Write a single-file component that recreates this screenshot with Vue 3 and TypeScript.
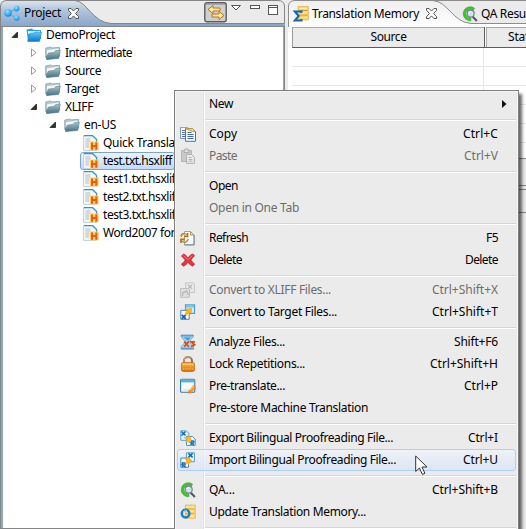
<script setup lang="ts">
interface TreeNode { label: string; width: number; level: number; icon: string; arrow?: 'open' | 'closed'; selected?: boolean }
interface MenuItem { label: string; width: number; keys?: string; keysWidth?: number; icon?: string; disabled?: boolean; hot?: boolean; submenu?: boolean }

const tree: TreeNode[] = [
  { label: 'DemoProject', width: 69, level: 0, icon: 'project', arrow: 'open' },
  { label: 'Intermediate', width: 67, level: 1, icon: 'folder', arrow: 'closed' },
  { label: 'Source', width: 36, level: 1, icon: 'folder', arrow: 'closed' },
  { label: 'Target', width: 34, level: 1, icon: 'folder', arrow: 'closed' },
  { label: 'XLIFF', width: 28, level: 1, icon: 'folder', arrow: 'open' },
  { label: 'en-US', width: 32, level: 2, icon: 'folder', arrow: 'open' },
  { label: 'Quick Translation', width: 93, level: 3, icon: 'file' },
  { label: 'test.txt.hsxliff', width: 69, level: 3, icon: 'file', selected: true },
  { label: 'test1.txt.hsxliff', width: 76, level: 3, icon: 'file' },
  { label: 'test2.txt.hsxliff', width: 76, level: 3, icon: 'file' },
  { label: 'test3.txt.hsxliff', width: 76, level: 3, icon: 'file' },
  { label: 'Word2007 format', width: 93, level: 3, icon: 'file' },
]

const groups: MenuItem[][] = [
  [{ label: 'New', width: 24, submenu: true }],
  [
    { label: 'Copy', width: 28, keys: 'Ctrl+C', keysWidth: 35, icon: 'copy' },
    { label: 'Paste', width: 28, keys: 'Ctrl+V', keysWidth: 34, icon: 'paste', disabled: true },
  ],
  [
    { label: 'Open', width: 29 },
    { label: 'Open in One Tab', width: 90, disabled: true },
  ],
  [
    { label: 'Refresh', width: 39, keys: 'F5', keysWidth: 12, icon: 'refresh' },
    { label: 'Delete', width: 33, keys: 'Delete', keysWidth: 33, icon: 'delete' },
  ],
  [
    { label: 'Convert to XLIFF Files...', width: 122, keys: 'Ctrl+Shift+X', keysWidth: 66, icon: 'toxliff', disabled: true },
    { label: 'Convert to Target Files...', width: 128, keys: 'Ctrl+Shift+T', keysWidth: 66, icon: 'totarget' },
  ],
  [
    { label: 'Analyze Files...', width: 76, keys: 'Shift+F6', keysWidth: 44, icon: 'analyze' },
    { label: 'Lock Repetitions...', width: 96, keys: 'Ctrl+Shift+H', keysWidth: 68, icon: 'lock' },
    { label: 'Pre-translate...', width: 76, keys: 'Ctrl+P', keysWidth: 34, icon: 'pretranslate' },
    { label: 'Pre-store Machine Translation', width: 159 },
  ],
  [
    { label: 'Export Bilingual Proofreading File...', width: 184, keys: 'Ctrl+I', keysWidth: 30, icon: 'export' },
    { label: 'Import Bilingual Proofreading File...', width: 187, keys: 'Ctrl+U', keysWidth: 35, icon: 'import', hot: true },
  ],
  [
    { label: 'QA...', width: 26, keys: 'Ctrl+Shift+B', keysWidth: 66, icon: 'qa' },
    { label: 'Update Translation Memory...', width: 157, icon: 'update' },
  ],
  [],
]

/* Spreads a label's letters so that it takes exactly the given width. */
const vFit = {
  mounted(el: HTMLElement, binding: { value?: number }) {
    if (!binding.value) return
    const count = (el.textContent ?? '').length
    const natural = el.getBoundingClientRect().width
    el.style.letterSpacing = `${(binding.value - natural) / count}px`
  },
}
</script>

<template>
  <div class="window">
    <svg class="defs" width="0" height="0" aria-hidden="true">
      <defs>
        <linearGradient id="gFolder" x1="0" y1="0" x2="0" y2="1"><stop offset="0" stop-color="#a9c4ca" /><stop offset="1" stop-color="#437280" /></linearGradient>
        <linearGradient id="gBlue" x1="0" y1="0" x2="0" y2="1"><stop offset="0" stop-color="#63c9fb" /><stop offset="1" stop-color="#0a79cf" /></linearGradient>
        <linearGradient id="gLock" x1="0" y1="0" x2="0" y2="1"><stop offset="0" stop-color="#ffc052" /><stop offset="1" stop-color="#d96a08" /></linearGradient>
        <radialGradient id="gBall" cx=".4" cy=".3" r=".7"><stop offset="0" stop-color="#8be8ff" /><stop offset="1" stop-color="#0a8bea" /></radialGradient>
      </defs>
      <symbol id="nodes" viewBox="0 0 16 16">
        <path d="M4 8 12 4M4 8l8 5" stroke="#7fa9c8" stroke-width="1.4" />
        <circle cx="4" cy="8" r="3.7" fill="url(#gBall)" /><circle cx="12.7" cy="3.6" r="2.8" fill="url(#gBall)" /><circle cx="12.7" cy="13" r="2.8" fill="url(#gBall)" />
      </symbol>
      <symbol id="project" viewBox="0 0 16 16">
        <path d="M.6 2.6 6 1.6l1 1.2 8 .4v8l-2 3H2z" fill="#2a9be6" />
        <path d="M2 4 14 4v3H2z" fill="#d9f3ff" /><path d="M3.8 6.4 8 6l1-1 6.6.2-2.2 9.2H1.6z" fill="url(#gBlue)" stroke="#1683d3" stroke-width=".5" />
      </symbol>
      <symbol id="folder" viewBox="0 0 16 16">
        <path d="M.7 3 6 1.9l1 1 7.6-.6v9L2 14.5.7 12z" fill="#b4c8cd" stroke="#7f9ba3" stroke-width=".7" />
        <path d="M2 5.2 13.6 3.6v4L2 11z" fill="#f2f6f7" />
        <path d="M1.2 12 3.5 8 9 7.4l1.6-1.8 4.7-.5-1.6 8.4L1.6 14.6z" fill="url(#gFolder)" stroke="#527d89" stroke-width=".5" />
      </symbol>
      <symbol id="file" viewBox="0 0 16 16">
        <path d="M.6.6H10l3.4 3.6v11.2H.6z" fill="#f4f8fb" stroke="#b5d2e6" /><path d="M1 .7h8.6l4 3.8V8" fill="none" stroke="#2f94d4" stroke-width="1.2" />
        <path d="M2.4 4h5M2.4 6h5M2.4 8h4M2.4 10h4M2.4 12h4" stroke="#b4b9be" />
        <path d="M7 6.5h8.7v8.8H7z" fill="#ffd25d" /><path d="M9 7.500v7.300M13.300 7.500v7.300M9 11h4" stroke="#ea5a1c" stroke-width="2" />
      </symbol>
      <symbol id="copy" viewBox="0 0 16 16">
        <path d="M.6 1.5h7l2 2v9h-9z" fill="#fff" stroke="#7790b4" /><path d="M.6 1.5h7l2 2" fill="none" stroke="#bda45b" /><path d="M2 4.5h3M2 6.5h3M2 8.5h3M2 10.5h3" stroke="#5877ae" />
        <path d="M5.5 2.5h7l3 3v9.8h-10z" fill="#f5f8ff" stroke="#58709c" /><path d="M5.5 2.5h7l3 3h-3z" fill="#eed78c" stroke="#b89743" /><path d="M7.5 6.5h4M7.5 8.5h6M7.5 10.5h6M7.5 12.5h6" stroke="#4667a8" />
      </symbol>
      <symbol id="paste" viewBox="0 0 16 16">
        <path d="M1.500 2.500h10v11h-10z" fill="#c9c9c9" stroke="#b4b4b4" /><path d="M4 3.500 5 1h3l1 2.500v1H4z" fill="#ddd" stroke="#ababab" /><path d="M6.5 6.5h5l3 3v5.8h-8z" fill="#eaeaea" stroke="#b0b0b0" /><path d="M8.5 9.5h3M8.5 11.5h4M8.5 13.2h4" stroke="#b4b4b4" />
      </symbol>
      <symbol id="refresh" viewBox="0 0 16 16">
        <path d="M4.5 1.5h6l3.6 3.6v9.8H4.5z" fill="#f9fbff" stroke="#a9a782" /><path d="M14.1 5v9.9H4.5" fill="none" stroke="#7285ac" /><path d="M10.5 1.5v3.6h3.6z" fill="#f3df9c" stroke="#b89b50" />
        <path d="M1 6.500C1.5 3.500 5 3 6 5M7.500 3v3.500H4.200M8 9c-.5 3-4 4-5.500 2M1 13V9.400h3.600" fill="none" stroke="#a87420" stroke-width="1.7" /><path d="M1.5 6.3C2 4.2 5 3.6 6 5M7.6 9.3c-.6 2.4-3.3 3-4.6 1.6" fill="none" stroke="#f2cd6c" />
      </symbol>
      <symbol id="delete" viewBox="0 0 16 16">
        <path d="M3.500 2C5.500 2.800 6.800 4.400 8 5.600 9.500 4.100 10.800 2.500 12.800 2l1.700 1.900C13 5 11.600 6.600 10.800 8c1 1.500 2.400 2.900 3.800 4l-2 2.200C11 13.400 9.400 12 8 10.600 6.600 12 5 13.800 3.300 14.200L1.400 12C3 11 4.500 9.600 5.300 8.100 4.300 6.600 3 5.300 1.500 4.200z" fill="#e2363e" stroke="#bb1c28" stroke-width=".8" /><path d="m3.400 3.600 4.600 4 4.400-4" fill="none" stroke="#f0747c" />
      </symbol>
      <symbol id="toxliff" viewBox="0 0 16 16">
        <path d="M5.6.8h7.6l1.3 1.5v8.2H5.6z" fill="#e8e8e8" stroke="#c6c6c6" /><path d="M.6 6.5h8l.9 1v7.8H.6z" fill="#dedede" stroke="#c0c0c0" /><path d="m8 2.8 4 4M12 2.8l-4 4M2.5 14v-3l4-2 2 4" stroke="#bababa" stroke-width="1.4" fill="none" />
      </symbol>
      <symbol id="totarget" viewBox="0 0 16 16">
        <path d="M5.5.9h9v8.5h-9z" fill="#d8effb" stroke="#43a4db" stroke-width="1.2" /><path d="M6 1.5h8v2H6z" fill="#6fc3ed" /><path d="M.8 6.3h8.4v9H.8z" fill="#f7fcff" stroke="#438abd" /><path d="m1.8 10.8 4 4M5.8 10.8l-4 4" stroke="#1260ac" stroke-width="1.7" />
        <path d="m5 11 1.5-4.5-1.2-1.3 6.4-.8-.8 6-1.6-1.4z" fill="#ffb51a" stroke="#e68a08" stroke-width=".5" />
      </symbol>
      <symbol id="analyze" viewBox="0 0 16 16">
        <path d="M1.2.9h12v2l-4 4.8 4.4 5.1v2.4H1v-2.4l4.5-5L1.2 3z" fill="#a4d5ee" stroke="#6a9fbd" stroke-width=".7" /><path d="M1 .9h12.400v1.500H1zM1 13.800h12.600v1.500H1z" fill="#5b9fc8" /><path d="M3.4 3.500h7.6L8 6.400z" fill="#2e9ce0" />
        <path d="m4.2 7.4 4.6 5.4M8.8 7.4l-4.6 5.4M10 7.8h5M12.5 7.8v1.5l2 1.5-3.5 2" stroke="#de4a14" stroke-width="1.7" fill="none" />
      </symbol>
      <symbol id="lock" viewBox="0 0 16 16">
        <path d="M4 8V4.800a4 3.800 0 0 1 8 0V8" fill="none" stroke="#9a6e4b" stroke-width="2" /><path d="M4 6V4.700a4 4 0 0 1 6.500-3" fill="none" stroke="#ddc0a1" stroke-width=".8" />
        <rect x="1.4" y="6.4" width="13.2" height="9" rx="2" fill="url(#gLock)" stroke="#b85d0c" stroke-width=".7" /><path d="M3 8.500h10M2.500 13h11" stroke="#ffd27a" stroke-width=".8" stroke-dasharray="2 1" />
      </symbol>
      <symbol id="pretranslate" viewBox="0 0 16 16">
        <rect x=".6" y="1.2" width="14.2" height="13" rx="1" fill="#f4fafc" stroke="#397ba2" stroke-width="1.1" /><path d="M1 1.6h13.5v2.8H1z" fill="#57b3df" /><path d="M3 12h6" stroke="#c7dbe4" />
        <path d="m8.5 15.2.7-3 4.6-4.6 2 2-4.5 4.8z" fill="#ff9a1f" stroke="#d66c0b" stroke-width=".6" /><path d="m9.4 12.4 4-4" stroke="#ffdf76" />
      </symbol>
      <symbol id="export" viewBox="0 0 16 16">
        <path d="M.8.8h5.5l2.5 2.5v7H.8z" fill="#e3f5ff" stroke="#55a3d2" /><path d="m1.5 1.5 4 4M5.5 1.5l-4 4" stroke="#1769b3" stroke-width="1.5" /><path d="M6.5 6.5h6l2.7 2.5v6.4H6.5z" fill="#eaf7ff" stroke="#4d91c1" />
        <path d="M11 15v-4h2a1 1 0 0 1 0 2h-2l3 2" fill="none" stroke="#1769b3" stroke-width="1.3" /><path d="M4 7.5h4.2V4.8L11 8v4H5.8l1-2.5z" fill="#ffbd28" stroke="#ee9410" stroke-width=".4" />
      </symbol>
      <symbol id="import" viewBox="0 0 16 16">
        <path d="M6.4.8h8v9h-8z" fill="#eaf7ff" stroke="#4d9ed0" /><path d="m8.4 1.4 4.2 4M12.6 1.4l-4.2 4" stroke="#1769b3" stroke-width="1.5" /><path d="M.8 6h7.7v9.3H.8z" fill="#eaf7ff" stroke="#438bbd" />
        <path d="M2.4 15v-4h2a1 1 0 0 1 0 2h-2l3.2 2" fill="none" stroke="#1769b3" stroke-width="1.3" /><path d="m5 6.5 5-1.4v2.7l2 .2-3.5 4.5L7.3 11l-2 1.3 1.2-3.8z" fill="#ffb522" stroke="#ec8a10" stroke-width=".4" />
      </symbol>
      <symbol id="qa" viewBox="0 0 16 16">
        <path d="M12.6 2.3A7 7 0 1 0 9 14.7l-.2-3.2A4 4 0 1 1 11 5z" fill="#45c22f" stroke="#2fa026" stroke-width=".5" /><path d="m10.5 10.5 4.4 4.6" stroke="#53595d" stroke-width="2.1" />
        <circle cx="8.7" cy="7.6" r="3.5" fill="#cbe6f0" stroke="#75858b" stroke-width="1.2" /><path d="M6.8 7a2.2 2.2 0 0 1 2-1.6" fill="none" stroke="#fff" />
      </symbol>
      <symbol id="update" viewBox="0 0 16 16">
        <path d="M5.3 1h10v3.3l-1 .5 1 .5v3.6l-1 .5 1 .5v4.4h-10z" fill="#ffd675" stroke="#e9a62e" stroke-width=".6" /><path d="M5.5 5h9M5.5 9.600h9" stroke="#e5a43c" /><path d="M6 3h8M6 7.2h8M7 12h7" stroke="#fff1bd" />
        <circle cx="5.6" cy="9.6" r="3.8" fill="none" stroke="#1d7fc6" stroke-width="2.5" /><path d="M3 8a3.5 3.5 0 0 1 4-1.6" fill="none" stroke="#79caf5" />
      </symbol>
      <symbol id="sigma" viewBox="0 0 16 16">
        <path d="M5 .5h10.400v3.300l-1 .5 1 .5v3.600l-1 .5 1 .5v4.600H5z" fill="#ffd36a" stroke="#e8a12b" stroke-width=".6" /><path d="M6 4.500h8.500M6 9.100h8.500" stroke="#dd9a30" /><path d="M6 2.500h8M7 6.800h7M9 11.800h5" stroke="#fff1bd" />
        <path d="M8.500 7V5.500H1.700l4 4.500-4 4.500h6.800V13" fill="none" stroke="#1466b8" stroke-width="2" />
      </symbol>
      <symbol id="close" viewBox="0 0 11 11">
        <path d="M.5.5h2.6l2.4 2.6L7.9.5h2.6v1.8L7.6 5.5l2.9 3.2v1.8H7.9L5.5 7.9l-2.4 2.6H.5V8.7l2.9-3.2L.5 2.3z" fill="#fff" stroke="#555" />
      </symbol>
    </svg>

    <section class="project">
      <header class="bar">
        <svg class="tabshape" width="285" height="26" viewBox="0 0 285 26">
          <defs><linearGradient id="gTab" x1="0" y1="0" x2="0" y2="1"><stop offset="0" stop-color="#dce5ef" /><stop offset=".35" stop-color="#b3c6dc" /><stop offset="1" stop-color="#88a7ca" /></linearGradient></defs>
          <path d="M0 23.5h285V26H0z" fill="#88a7ca" />
          <path d="M.5 26V6Q1 .5 7 .5h68c12 1 18 22 36 23V26z" fill="url(#gTab)" />
          <path d="M.5 26V6Q1 .5 7 .5h68c12 1 18 22 36 23h173.500V6Q284 .5 278 .5H75" fill="none" stroke="#858585" />
        </svg>
        <svg class="icon"><use href="#nodes" /></svg>
        <span v-fit="37" class="tabtitle">Project</span>
        <svg class="x"><use href="#close" /></svg>
        <div class="tools">
          <svg width="80" height="22" viewBox="0 0 80 22">
            <rect x=".8" y=".8" width="21.400" height="19" rx="2" fill="#cfcfcf" stroke="#5c5c5c" stroke-width="1.4" /><path d="M2 2.500h19" stroke="#aaa" /><path d="M4 7.500 9 3.500v2.500h7v3H9v2.500zM20 13.500l-5-4V12H8v3h7v2.500z" fill="#ffe9a6" stroke="#b67814" />
            <path d="M27.500 3.500h9L32 8z" fill="#fff" stroke="#555" /><rect x="46.500" y="3.500" width="9" height="3" fill="#fff" stroke="#555" />
            <rect x="64.500" y="3.500" width="9" height="9" fill="#fff" stroke="#555" /><path d="M64 5.500h10" stroke="#555" />
          </svg>
        </div>
      </header>
      <ul class="tree">
        <li v-for="node in tree" :key="node.label" :class="['node', 'level' + node.level]">
          <span class="twist">
            <svg v-if="node.arrow === 'open'" width="8" height="8"><path d="M6.500 1v5.500H1z" fill="#303030" stroke="#202020" stroke-width=".8" /></svg>
            <svg v-else-if="node.arrow" width="8" height="10"><path d="M1.500 1v7.500L6 4.700z" fill="#fff" stroke="#999" /></svg>
          </span>
          <span :class="['cell', { selected: node.selected }]">
            <svg class="icon"><use :href="'#' + node.icon" /></svg>
            <span v-fit="node.width" class="text">{{ node.label }}</span>
          </span>
        </li>
      </ul>
    </section>

    <section class="memory">
      <header class="bar">
        <svg class="tabshape" width="238" height="27" viewBox="0 0 238 27">
          <defs><linearGradient id="gPale" x1="0" y1="0" x2="0" y2="1"><stop offset="0" stop-color="#efefef" /><stop offset="1" stop-color="#fff" /></linearGradient></defs>
          <path d="M0 23h238v4H0z" fill="#fff" />
          <path d="M.5 27V6Q1 .5 7 .5h138c15 1 20 22 38 23V27z" fill="url(#gPale)" />
          <path d="M.5 27V6Q1 .5 7 .5h138c15 1 20 22 38 23h55M145 .5h93" fill="none" stroke="#8c8c8c" />
        </svg>
        <svg class="icon"><use href="#sigma" /></svg>
        <span v-fit="107" class="tabtitle">Translation Memory</span>
        <svg class="x"><use href="#close" /></svg>
        <svg class="icon second"><use href="#qa" /></svg>
        <span v-fit="57" class="tabtitle qa">QA Results</span>
      </header>
      <div class="grid head"><span class="col"><span v-fit="36">Source</span></span><span class="col status"><span v-fit="34">Status</span></span></div>
      <div v-for="row in 6" :key="row" class="grid row"><span /><span /></div>
      <div class="below">
        <div class="band one" /><div class="band two" /><div class="band three" />
      </div>
    </section>

    <nav class="menu">
      <div v-for="(group, index) in groups" :key="index" class="group">
        <div v-for="item in group" :key="item.label" :class="['item', { disabled: item.disabled, hot: item.hot }]">
          <span class="glyph"><svg v-if="item.icon" class="icon"><use :href="'#' + item.icon" /></svg></span>
          <span v-fit="item.width" class="text">{{ item.label }}</span>
          <span v-if="item.keys" v-fit="item.keysWidth" class="keys">{{ item.keys }}</span>
          <svg v-if="item.submenu" class="more" width="5" height="8"><path d="M0 0v8l4.500-4z" fill="#111" /></svg>
        </div>
      </div>
    </nav>

    <svg class="cursor" width="14" height="22" viewBox="0 0 14 22">
      <path d="M.7 1v15.500l3.700-3.500 3 6.400 2.500-1.100L7 12h5z" fill="#fff" stroke="#303030" />
    </svg>
  </div>
</template>

<style>
body { margin: 0; background: #ebebeb; overflow: hidden; }
</style>

<style scoped>
.window { position: relative; display: flex; gap: 3px; width: 526px; height: 529px; overflow: hidden; background: #ebebeb; font: 12px/18px "Noto Sans", "Open Sans", sans-serif; color: #000; }
.defs { position: absolute; }
.icon { display: block; width: 16px; height: 16px; flex: none; }
.tabtitle, .text, .keys, .col span { display: inline-block; white-space: nowrap; flex: none; }

.bar { position: relative; display: flex; align-items: center; height: 26px; box-sizing: border-box; }
.tabshape { position: absolute; left: 0; top: 0; }
.bar > *:not(.tabshape) { position: relative; }
.bar > .tabshape { position: absolute; }
.x { width: 11px; height: 11px; flex: none; }

.project { display: flex; flex-direction: column; width: 285px; flex: none; }
.project .bar { padding-left: 4px; }
.project .tabtitle { margin: 0 7px 0 4px; }
.tools { width: 81px; height: 22px; margin-left: auto; }
.tools svg { display: block; }
.tree { flex: 1; margin: 0; padding: 0; list-style: none; background: #fff; border-left: 2px solid #88a7ca; border-right: 2px solid #88a7ca; outline: 1px solid #858585; outline-offset: -1px; box-shadow: inset 1px 0 #88a7ca; }
.node { display: flex; align-items: center; height: 18px; overflow: hidden; }
.twist { display: flex; justify-content: flex-end; align-items: center; width: 12px; flex: none; margin-right: 4px; }
.cell { display: flex; align-items: center; gap: 4px; height: 16px; padding: 0 2px; border: 1px solid transparent; border-radius: 3px; }
.cell.selected { background: linear-gradient(#eaf3fe, #c1dcfc); border-color: #7da2ce; }
.level0 { padding-left: 5px; }
.level1 { padding-left: 24px; }
.level2 { padding-left: 43px; }
.level3 { padding-left: 62px; }

.memory { flex: 1; min-width: 0; display: flex; flex-direction: column; background: #fff; }
.memory .bar { height: 27px; padding-left: 5px; background: #ebebeb; }
.memory .tabtitle { margin: 0 7px 0 3px; }
.memory .second { margin-left: 25px; }
.memory .tabtitle.qa { margin-left: 3px; }
.grid { display: grid; grid-template-columns: 192px 1fr; margin-left: 4px; box-sizing: border-box; }
.head { height: 21px; background: #ebebeb; border-bottom: 1px solid #5e5b5b; border-left: 1px solid #999; box-shadow: inset 0 1px #a9a9a9; }
.col { display: flex; align-items: center; justify-content: center; border-right: 1px solid #5e5b5b; box-sizing: border-box; overflow: hidden; }
.col.status { justify-content: flex-start; padding-left: 22px; border: 0; border-left: 1px solid #fff; box-shadow: inset 1px 0 #aaa; }
.row { height: 19px; border-bottom: 1px solid #e7e7e7; }
.row span:first-child { border-right: 1px solid #e7e7e7; }
.row:nth-child(8) { border: 0; height: 15px; }
.below { flex: 1; background: #ebebeb; border-top: 1px solid #858585; }
.band { box-sizing: border-box; border-bottom: 1px solid #858585; }
.one { height: 27px; }
.two { height: 4px; }
.three { height: 23px; }

.menu { position: absolute; left: 174px; top: 90px; width: 345px; height: 450px; box-sizing: border-box; padding: 2px; border: 1px solid #808080; background: linear-gradient(#e2e3e3, #e2e3e3) 28px 2px / 1px 100% no-repeat, linear-gradient(#fff, #fff) 29px 2px / 1px 100% no-repeat, #ebebeb; box-shadow: inset 1px 1px #f5f5f5, inset -1px 0 #f5f5f5, 3px 4px 3px rgba(0, 0, 0, .6); }
.group + .group { padding-top: 8px; background: linear-gradient(#d6d6d6, #d6d6d6) 28px 4px / 311px 1px no-repeat, linear-gradient(#fff, #fff) 28px 5px / 311px 1px no-repeat; }
.item { display: flex; align-items: center; height: 22px; box-sizing: border-box; border: 1px solid transparent; border-radius: 3px; padding-right: 17px; }
.item.hot { border-color: #aecff7; background: linear-gradient(rgba(240, 244, 250, .75), rgba(216, 228, 246, .75)); }
.disabled { color: #6d6d6d; }
.glyph { width: 31px; padding-left: 2px; box-sizing: border-box; flex: none; }
.keys { margin-left: auto; }
.more { margin-left: auto; margin-right: -9px; }
.cursor { position: absolute; left: 415px; top: 455px; }
</style>
